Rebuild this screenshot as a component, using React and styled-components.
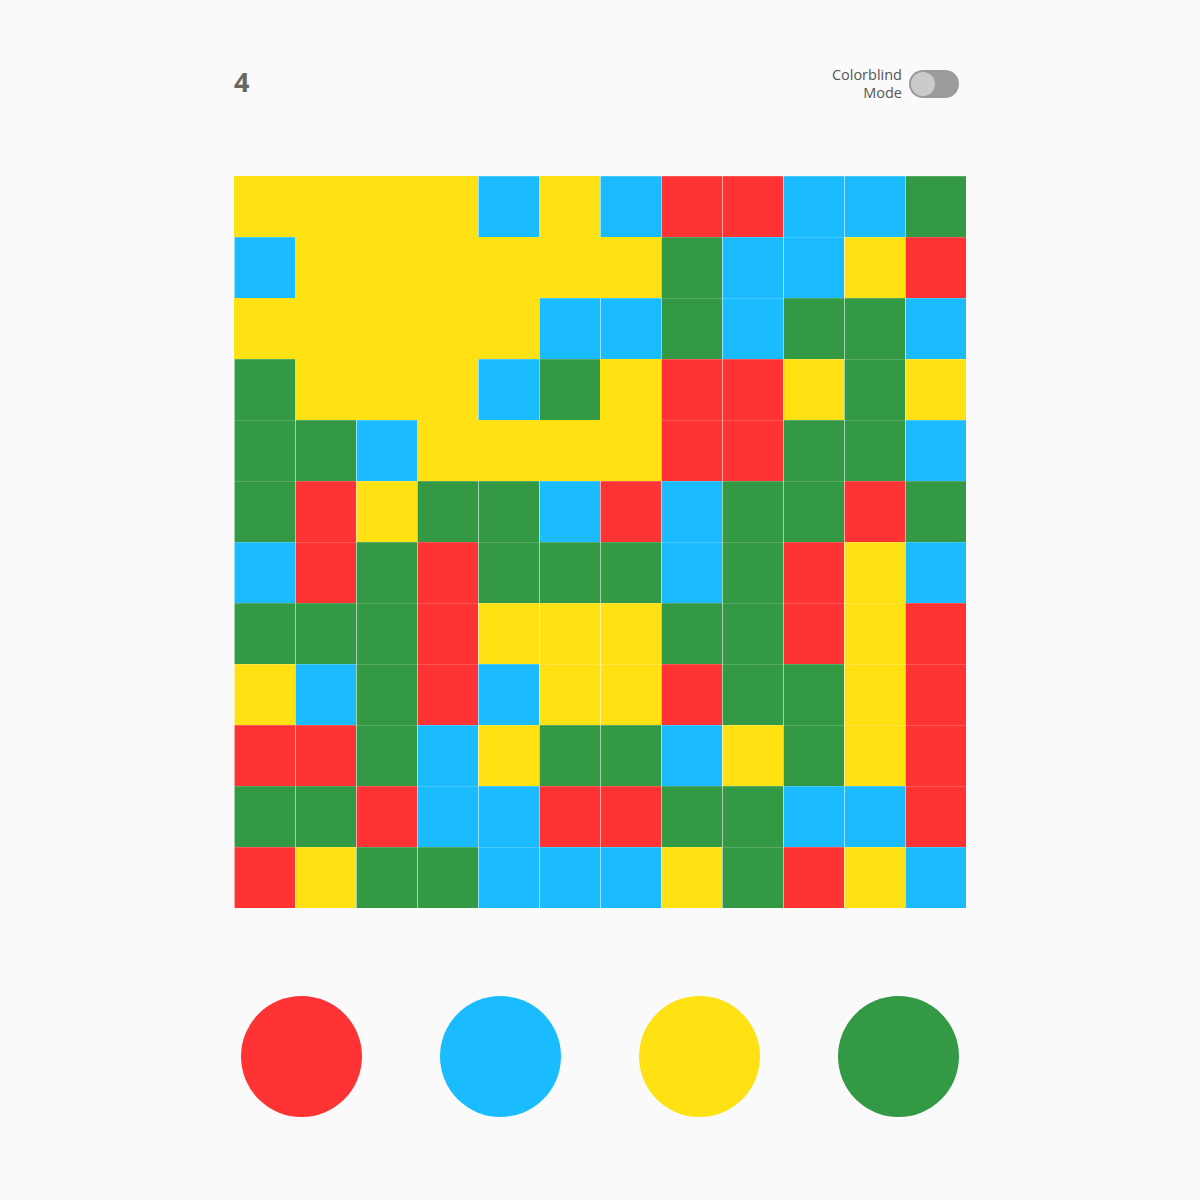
import React, { useMemo, useState } from "react";
import styled, { createGlobalStyle } from "styled-components";

const Global = createGlobalStyle`
  html, body { margin: 0; padding: 0; background: #fafafa; }
  body { font-family: "Open Sans", "Noto Sans", sans-serif; }
`;

const COLORS = { R: "#ff3333", B: "#1abcff", Y: "#ffe114", G: "#339944" };

const ROWS = [
  "YYYYBYBRRBBG",
  "BYYYYYYGBBYR",
  "YYYYYBBGBGGB",
  "GYYYBGYRRYGY",
  "GGBYYYYRRGGB",
  "GRYGGBRBGGRG",
  "BRGRGGGBGRYB",
  "GGGRYYYGGRYR",
  "YBGRBYYRGGYR",
  "RRGBYGGBYGYR",
  "GGRBBRRGGBBR",
  "RYGGBBBYGRYB",
];

const Page = styled.div`
  width: 732px;
  margin: 0 auto;
  padding-top: 64px;
`;

const Header = styled.div`
  height: 40px;
  display: flex;
  align-items: center;
  justify-content: space-between;
  padding-right: 7px;
`;

const Moves = styled.div`
  font-size: 27px;
  font-weight: 700;
  color: #666;
  line-height: 1;
  margin-bottom: 6px;
`;

const ToggleWrap = styled.label`
  display: flex;
  align-items: center;
  gap: 7px;
`;

const ToggleText = styled.span`
  display: flex;
  flex-direction: column;
  align-items: flex-end;
  font-size: 14.5px;
  line-height: 18px;
  color: #555;
`;

const Track = styled.div`
  width: 50px;
  height: 28px;
  border-radius: 14px;
  background: #9b9b9b;
  padding: 2px;
  box-sizing: border-box;
  display: flex;
  align-items: center;
  justify-content: ${(p) => (p.$on ? "flex-end" : "flex-start")};
`;

const Knob = styled.div`
  width: 24px;
  height: 24px;
  border-radius: 50%;
  background: #cbcbcb;
`;

const Grid = styled.div`
  margin-top: 72px;
  display: grid;
  grid-template-columns: repeat(12, 61px);
  grid-auto-rows: 61px;
`;

const Cell = styled.div`
  background: ${(p) => p.$color};
  box-shadow: ${(p) =>
    p.$flooded
      ? "none"
      : "inset 1px 0 rgba(255,255,255,0.55), inset 0 1px rgba(255,255,255,0.18)"};
`;

const Buttons = styled.div`
  margin-top: 88px;
  padding: 0 7px;
  display: flex;
  justify-content: space-between;
`;

const ColorButton = styled.button`
  width: 121px;
  height: 121px;
  border-radius: 50%;
  border: none;
  padding: 0;
  background: ${(p) => p.$color};
  cursor: pointer;
`;

function floodSet(rows) {
  const n = rows.length;
  const start = rows[0][0];
  const seen = new Set(["0,0"]);
  const stack = [[0, 0]];
  while (stack.length) {
    const [r, c] = stack.pop();
    for (const [dr, dc] of [[1, 0], [-1, 0], [0, 1], [0, -1]]) {
      const nr = r + dr, nc = c + dc;
      if (nr < 0 || nc < 0 || nr >= n || nc >= n) continue;
      const k = nr + "," + nc;
      if (seen.has(k) || rows[nr][nc] !== start) continue;
      seen.add(k);
      stack.push([nr, nc]);
    }
  }
  return seen;
}

export default function App() {
  const [on, setOn] = useState(false);
  const flooded = useMemo(() => floodSet(ROWS), []);
  return (
    <>
      <Global />
      <Page>
        <Header>
          <Moves>4</Moves>
          <ToggleWrap onClick={() => setOn(!on)}>
            <ToggleText>
              <span>Colorblind</span>
              <span>Mode</span>
            </ToggleText>
            <Track $on={on}>
              <Knob />
            </Track>
          </ToggleWrap>
        </Header>
        <Grid>
          {ROWS.map((row, r) =>
            row.split("").map((ch, c) => (
              <Cell
                key={r + "-" + c}
                $color={COLORS[ch]}
                $flooded={flooded.has(r + "," + c)}
              />
            ))
          )}
        </Grid>
        <Buttons>
          {["R", "B", "Y", "G"].map((k) => (
            <ColorButton key={k} $color={COLORS[k]} aria-label={k} />
          ))}
        </Buttons>
      </Page>
    </>
  );
}
